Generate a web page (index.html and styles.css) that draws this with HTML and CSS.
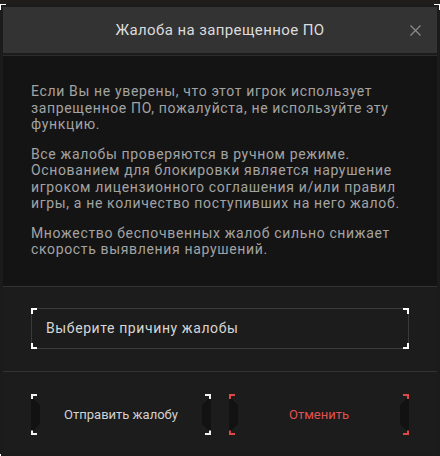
FILE: index.html
```html
<!DOCTYPE html>
<html lang="ru">
<head>
    <meta charset="UTF-8">
    <meta name="viewport" content="width=device-width, initial-scale=1.0">
    <title>Жалоба</title>
    <link rel="stylesheet" href="styles.css">
</head>
<body>
    <div class="dialog">
        <div class="dialog-header">
            <h2 class="dialog-title">Жалоба на запрещенное ПО</h2>
            <button class="close-btn" aria-label="Закрыть">
                <svg width="11" height="11" viewBox="0 0 11 11">
                    <path d="M0.5 0.5 L10.5 10.5 M10.5 0.5 L0.5 10.5" stroke="#8c8c8c" stroke-width="1.2" fill="none"/>
                </svg>
            </button>
        </div>

        <div class="dialog-body">
            <p>Если Вы не уверены, что этот игрок использует запрещенное ПО, пожалуйста, не используйте эту функцию.</p>
            <p>Все жалобы проверяются в ручном режиме. Основанием для блокировки является нарушение игроком лицензионного соглашения и/или правил игры, а не количество поступивших на него жалоб.</p>
            <p>Множество беспочвенных жалоб сильно снижает скорость выявления нарушений.</p>
        </div>

        <div class="dialog-section">
            <div class="select">Выберите причину жалобы</div>
        </div>

        <div class="dialog-actions">
            <button class="action-btn">Отправить жалобу</button>
            <button class="action-btn danger">Отменить</button>
        </div>
    </div>
</body>
</html>
```

FILE: styles.css
```css
* {
    margin: 0;
    padding: 0;
    box-sizing: border-box;
    font-family: 'Roboto', 'Liberation Sans', sans-serif;
}

body {
    background-color: #201e1b;
    overflow: hidden;
}

.dialog {
    position: relative;
    margin-top: 4px;
    background-color: #1b1b1b;
    padding: 3px 3px 6px;
}

/* white corner marks of the window */
.dialog::before {
    content: '';
    position: absolute;
    inset: 0;
    pointer-events: none;
    background:
        linear-gradient(#fff, #fff) left top / 6px 1px no-repeat,
        linear-gradient(#fff, #fff) left top / 1px 6px no-repeat,
        linear-gradient(#fff, #fff) right top / 6px 1px no-repeat,
        linear-gradient(#fff, #fff) right top / 1px 6px no-repeat,
        linear-gradient(#fff, #fff) left bottom / 6px 1px no-repeat,
        linear-gradient(#fff, #fff) left bottom / 1px 6px no-repeat;
}

.dialog-header {
    display: grid;
    grid-template-columns: 40px 1fr 40px;
    align-items: center;
    height: 46px;
    background-color: #333333;
    margin-bottom: 2px;
}

.dialog-title {
    grid-column: 2;
    text-align: center;
    font-size: 15px;
    font-weight: 400;
    letter-spacing: 0.4px;
    color: #dcdcdc;
}

.close-btn {
    grid-column: 3;
    justify-self: end;
    margin-right: 16px;
    background: none;
    border: none;
    width: 11px;
    height: 11px;
    display: flex;
    cursor: pointer;
}

.dialog-body {
    background-color: #141414;
    border-top: 1px solid #2c2c2c;
    border-bottom: 1px solid #333333;
    padding: 27px 28px 28px;
    color: #a3a3a3;
    font-size: 14px;
    line-height: 16.5px;
    letter-spacing: 0.65px;
}

.dialog-body p {
    margin-bottom: 13px;
}

.dialog-body p:last-child {
    margin-bottom: 0;
}

.dialog-section {
    background-color: #1c1c1c;
    border-bottom: 1px solid #333333;
    padding: 21px 28px 22px;
}

.select {
    position: relative;
    height: 41px;
    border: 1px solid #3a3a3a;
    display: flex;
    align-items: center;
    padding-left: 14px;
    color: #d6d6d6;
    font-size: 14px;
    letter-spacing: 0.6px;
}

.select::before {
    content: '';
    position: absolute;
    inset: -1px;
    background:
        linear-gradient(#fff, #fff) left top / 6px 2px no-repeat,
        linear-gradient(#fff, #fff) left top / 2px 6px no-repeat,
        linear-gradient(#fff, #fff) right top / 6px 2px no-repeat,
        linear-gradient(#fff, #fff) right top / 2px 6px no-repeat,
        linear-gradient(#fff, #fff) left bottom / 6px 2px no-repeat,
        linear-gradient(#fff, #fff) left bottom / 2px 6px no-repeat,
        linear-gradient(#fff, #fff) right bottom / 6px 2px no-repeat,
        linear-gradient(#fff, #fff) right bottom / 2px 6px no-repeat;
}

.dialog-actions {
    background-color: #1c1c1c;
    display: flex;
    justify-content: space-between;
    padding: 22px 28px 19px;
}

.action-btn {
    --c: #f2f2f2;
    position: relative;
    width: 180px;
    height: 41px;
    border: none;
    color: #d2d2d2;
    font-size: 13px;
    cursor: pointer;
    background:
        linear-gradient(var(--c), var(--c)) left top / 6px 2px no-repeat,
        linear-gradient(var(--c), var(--c)) left top / 2px 6px no-repeat,
        linear-gradient(var(--c), var(--c)) right top / 6px 2px no-repeat,
        linear-gradient(var(--c), var(--c)) right top / 2px 6px no-repeat,
        linear-gradient(var(--c), var(--c)) left bottom / 6px 2px no-repeat,
        linear-gradient(var(--c), var(--c)) left bottom / 2px 6px no-repeat,
        linear-gradient(var(--c), var(--c)) right bottom / 6px 2px no-repeat,
        linear-gradient(var(--c), var(--c)) right bottom / 2px 6px no-repeat,
        transparent;
}

/* dark side tabs */
.action-btn::before,
.action-btn::after {
    content: '';
    position: absolute;
    top: 5px;
    bottom: 4px;
    width: 9px;
    background-color: #121212;
}

.action-btn::before {
    left: 0;
    clip-path: polygon(0 0, 25% 0, 100% 21%, 100% 79%, 25% 100%, 0 100%);
}

.action-btn::after {
    right: 0;
    clip-path: polygon(100% 0, 75% 0, 0 21%, 0 79%, 75% 100%, 100% 100%);
}

.action-btn.danger {
    --c: #e04848;
    color: #e0514f;
}
```
